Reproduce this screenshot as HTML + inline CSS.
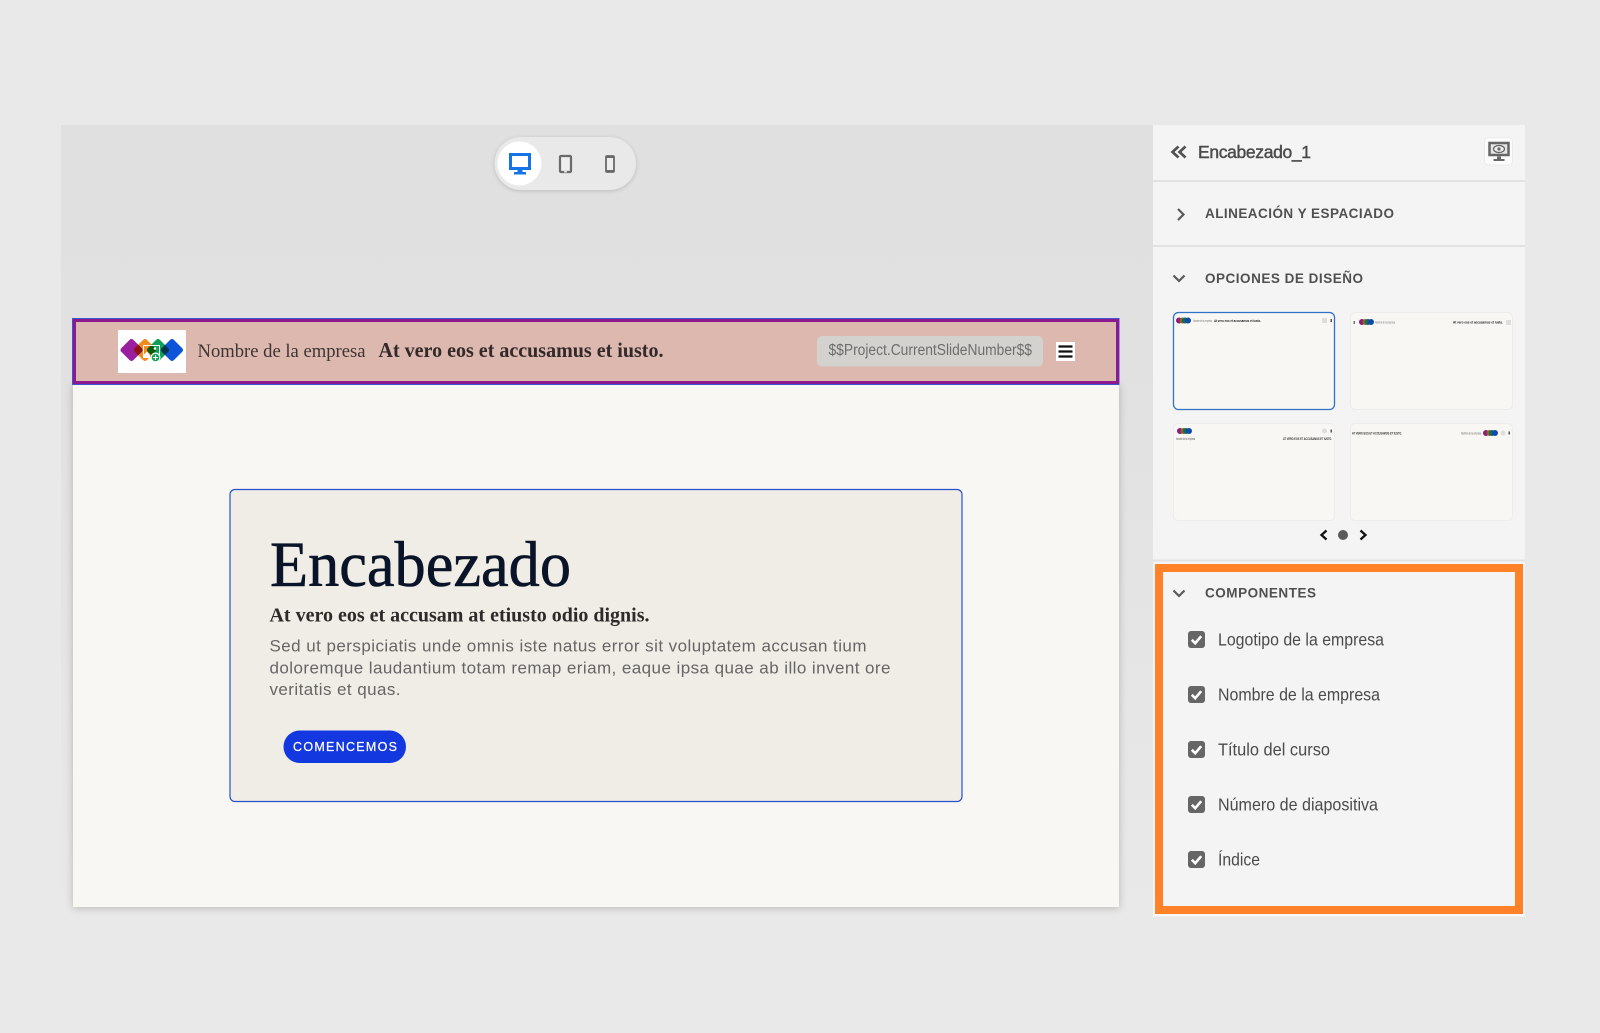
<!DOCTYPE html>
<html lang="es">
<head>
<meta charset="utf-8">
<title>Encabezado_1</title>
<style>
html,body{margin:0;padding:0;background:#e9e9e9;width:1600px;height:1033px;overflow:hidden}
svg{display:block}
.serif{font-family:"Liberation Serif",serif}
.sans{font-family:"Liberation Sans",sans-serif}
.ui{font-family:"Liberation Sans",sans-serif;fill:#4b4b4b}
.h{font-size:13.500px;font-weight:bold;fill:#505050}
.c{font-size:17.500px;fill:#4b4b4b}
.t{font-size:3.400px}
</style>
</head>
<body>
<svg width="1600" height="1033" viewBox="0 0 1600 1033" xmlns="http://www.w3.org/2000/svg">
<defs>
<linearGradient id="cv" x1="0" y1="0" x2="0" y2="1"><stop offset="0" stop-color="#e0e0e0"/><stop offset=".3" stop-color="#e1e1e1"/><stop offset="1" stop-color="#e9e9e9"/></linearGradient>
<g id="mini">
<circle cx="3" cy="0" r="3" fill="#8e1a7e"/>
<circle cx="6.500" cy="0" r="3" fill="#8a6a18"/>
<circle cx="9" cy="0" r="3" fill="#0f6a56"/>
<circle cx="12" cy="0" r="3" fill="#1048b0"/>
</g>
<g id="chk">
<rect width="17" height="17" rx="3" fill="#666"/>
<path d="M3.800 8.800l3.400 3.400L13.200 5.200" fill="none" stroke="#fff" stroke-width="2.600"/>
</g>
<path id="down" d="M0 0l5.500 5.500L11 0" fill="none" stroke="#5a5a5a" stroke-width="2.200"/>
</defs>

<rect width="1600" height="1033" fill="#e9e9e9"/>
<rect x="61" y="125" width="1092" height="791" fill="url(#cv)"/>

<!-- device toolbar -->
<rect x="494.500" y="137" width="141.500" height="53" rx="26.500" fill="#e9e9e9" style="filter:drop-shadow(0 1px 2px rgba(0,0,0,.16))"/>
<circle cx="519.500" cy="163.500" r="22" fill="#fff"/>
<rect x="510.500" y="154.500" width="19" height="14" fill="#fff" stroke="#1473e6" stroke-width="3"/>
<path d="M517.500 170h5v2h3.500v2.500h-12V172h3.500z" fill="#1473e6"/>
<rect x="560" y="156" width="11" height="16" rx="1" fill="#eee" stroke="#6a6a6a" stroke-width="2.200"/>
<rect x="564" y="171" width="3" height="1.500" fill="#ddd"/>
<rect x="606" y="156" width="8" height="16" rx="1" fill="#eee" stroke="#6a6a6a" stroke-width="1.800"/>
<rect x="606" y="155.500" width="8" height="2.500" fill="#6a6a6a"/>
<rect x="606" y="170" width="8" height="2.500" fill="#6a6a6a"/>

<!-- slide -->
<rect x="73" y="384" width="1046" height="523" fill="#f8f7f3" style="filter:drop-shadow(0 1px 4px rgba(0,0,0,.22))"/>

<!-- header bar -->
<rect x="72" y="318" width="1047.500" height="67" fill="#3f55d0"/>
<rect x="74.500" y="320.500" width="1043" height="62" fill="#dcb8ae" stroke="#8b1a8f" stroke-width="3"/>
<rect x="118" y="330" width="68" height="43" fill="#fff"/>
<g style="isolation:isolate">
<rect x="123" y="341.500" width="17" height="17" rx="2.500" transform="rotate(45 131.500 350)" fill="#9a1f9e" style="mix-blend-mode:multiply"/>
<rect x="136.500" y="341.500" width="17" height="17" rx="2.500" transform="rotate(45 145 350)" fill="#ee8d1c" style="mix-blend-mode:multiply"/>
<rect x="149.500" y="341.500" width="17" height="17" rx="2.500" transform="rotate(45 158 350)" fill="#10a05a" style="mix-blend-mode:multiply"/>
<rect x="163.500" y="341.500" width="17" height="17" rx="2.500" transform="rotate(45 172 350)" fill="#0d55d8" style="mix-blend-mode:multiply"/>
</g>
<rect x="143.500" y="345.500" width="16" height="12" fill="none" stroke="#fff" stroke-width="1"/>
<path d="M144 357.500v-3l3-3 3 3.500v2.500z" fill="#fff"/>
<circle cx="155" cy="348.500" r="1.300" fill="#fff"/>
<circle cx="155.500" cy="357.500" r="5" fill="#fff"/>
<circle cx="155.500" cy="357.500" r="3.800" fill="#12a05c"/>
<path d="M155.500 355v5M153 357.500h5" stroke="#fff" stroke-width="1.100"/>

<text class="serif" x="197.500" y="357" font-size="19" fill="#3d3534" textLength="168" lengthAdjust="spacingAndGlyphs">Nombre de la empresa</text>
<text class="serif" x="378.500" y="357" font-size="21" font-weight="bold" fill="#33292b" textLength="285" lengthAdjust="spacingAndGlyphs">At vero eos et accusamus et iusto.</text>

<rect x="817" y="336" width="226" height="30.500" rx="5" fill="#d3d2ce"/>
<text class="sans" x="828.500" y="355" font-size="15.500" fill="#6e6e6e" textLength="203.500" lengthAdjust="spacingAndGlyphs">$$Project.CurrentSlideNumber$$</text>

<rect x="1056" y="342" width="19" height="19" fill="#fff"/>
<path d="M1058.500 346.500h14M1058.500 351.500h14M1058.500 356.500h14" stroke="#111" stroke-width="2.200"/>

<!-- content card -->
<rect x="230" y="489.500" width="732" height="312" rx="5" fill="#f0ede6" stroke="#2a50c8" stroke-width="1.200"/>
<text class="serif" x="270" y="586" font-size="65" fill="#0a1428" stroke="#0a1428" stroke-width=".6" textLength="301" lengthAdjust="spacingAndGlyphs">Encabezado</text>
<text class="serif" x="269.500" y="621.500" font-size="20" font-weight="bold" fill="#2d2a2a" textLength="380" lengthAdjust="spacingAndGlyphs">At vero eos et accusam at etiusto odio dignis.</text>
<text class="sans" x="269.500" y="651.500" font-size="17" fill="#666" textLength="597" lengthAdjust="spacing">Sed ut perspiciatis unde omnis iste natus error sit voluptatem accusan tium</text>
<text class="sans" x="269.500" y="673.500" font-size="17" fill="#666" textLength="621" lengthAdjust="spacing">doloremque laudantium totam remap eriam, eaque ipsa quae ab illo invent ore</text>
<text class="sans" x="269.500" y="695" font-size="17" fill="#666" textLength="131" lengthAdjust="spacing">veritatis et quas.</text>
<rect x="283.500" y="730.500" width="122.500" height="32.500" rx="16.250" fill="#1438e0"/>
<text class="sans" x="293" y="751" font-size="12.500" fill="#fff" stroke="#fff" stroke-width=".25" textLength="104" lengthAdjust="spacing">COMENCEMOS</text>

<!-- right panel -->
<rect x="1153" y="125" width="372" height="791" fill="#f4f4f4"/>
<rect x="1153" y="914" width="372" height="2.500" fill="#f8f8f8"/>
<path d="M1178.500 146.500l-6 5.500 6 5.500M1185.500 146.500l-6 5.500 6 5.500" fill="none" stroke="#505050" stroke-width="2.600"/>
<text class="ui" x="1198" y="158" font-size="17.500" stroke="#4b4b4b" stroke-width=".45" textLength="113" lengthAdjust="spacing">Encabezado_1</text>
<rect x="1484.500" y="137.500" width="28" height="27.500" rx="4" fill="#fbfbfb" stroke="#ebebeb"/>
<rect x="1489.500" y="143" width="19" height="12" fill="#e6e6e6" stroke="#666" stroke-width="2.500"/>
<ellipse cx="1499" cy="149" rx="5.500" ry="3.500" fill="#eee" stroke="#666" stroke-width="1.300"/>
<circle cx="1499" cy="149" r="1.600" fill="#666"/>
<path d="M1497 156.500h4v2.500h3.500v2h-11v-2h3.500z" fill="#666"/>

<rect x="1153" y="180" width="372" height="2" fill="#e2e2e2"/>
<path d="M1178 209l5.500 5.500-5.500 5.500" fill="none" stroke="#5a5a5a" stroke-width="2.200"/>
<text class="ui h" x="1205" y="218" textLength="189" lengthAdjust="spacing">ALINEACIÓN Y ESPACIADO</text>
<rect x="1153" y="245" width="372" height="2" fill="#e2e2e2"/>
<use href="#down" x="1173.500" y="275.500"/>
<text class="ui h" x="1205" y="283" textLength="158" lengthAdjust="spacing">OPCIONES DE DISEÑO</text>

<!-- thumbnails -->
<rect x="1173.500" y="312.500" width="161" height="97" rx="5" fill="#f9f7f4" stroke="#2f72c6" stroke-width="1.300"/>
<use href="#mini" x="1176" y="320.500"/>
<text class="sans t" x="1193" y="322" fill="#777" textLength="19" lengthAdjust="spacingAndGlyphs">Nombre de la empresa</text>
<text class="sans t" x="1214" y="322" fill="#222" font-weight="bold" textLength="47" lengthAdjust="spacingAndGlyphs">At vero eos et accusamus et iusto.</text>
<rect x="1322" y="318" width="5" height="5" fill="#ddd"/>
<rect x="1330.500" y="319" width="1.500" height="3" fill="#555"/>

<rect x="1350.500" y="312.500" width="162" height="97" rx="5" fill="#f9f7f4" stroke="#ececec"/>
<rect x="1353.500" y="321" width="1.500" height="3" fill="#777"/>
<use href="#mini" x="1359" y="322"/>
<text class="sans t" x="1375" y="323.500" fill="#777" textLength="20" lengthAdjust="spacingAndGlyphs">Nombre de la empresa</text>
<text class="sans t" x="1453" y="323.500" fill="#222" font-weight="bold" textLength="50" lengthAdjust="spacingAndGlyphs">At vero eos et accusamus et iusto.</text>
<rect x="1506" y="320" width="5" height="5" fill="#ddd"/>

<rect x="1173.500" y="423.500" width="161" height="97" rx="5" fill="#f9f7f4" stroke="#ececec"/>
<use href="#mini" x="1177" y="431"/>
<text class="sans t" x="1176" y="440" fill="#555" textLength="19" lengthAdjust="spacingAndGlyphs">Nombre de la empresa</text>
<text class="sans t" x="1283" y="440" fill="#333" font-weight="bold" textLength="49" lengthAdjust="spacingAndGlyphs">AT VERO EOS ET ACCUSAMUS ET IUSTO.</text>
<circle cx="1324.500" cy="431" r="2.500" fill="#ddd"/>
<rect x="1330.500" y="429.500" width="1.500" height="3" fill="#555"/>

<rect x="1350.500" y="423.500" width="162" height="97" rx="5" fill="#f9f7f4" stroke="#ececec"/>
<text class="sans t" x="1352" y="434.500" fill="#333" font-weight="bold" textLength="50" lengthAdjust="spacingAndGlyphs">AT VERO EOS ET ACCUSAMUS ET IUSTO.</text>
<text class="sans t" x="1461" y="434.500" fill="#666" textLength="20" lengthAdjust="spacingAndGlyphs">Nombre de la empresa</text>
<use href="#mini" x="1483" y="433"/>
<circle cx="1503" cy="433" r="2.500" fill="#ddd"/>
<rect x="1508.500" y="431.500" width="1.500" height="3" fill="#555"/>

<path d="M1326.500 530.500l-5 4.500 5 4.500M1360.500 530.500l5 4.500-5 4.500" fill="none" stroke="#111" stroke-width="2.300"/>
<circle cx="1343" cy="535" r="5" fill="#5a5a5a"/>
<rect x="1153" y="559.500" width="372" height="2" fill="#e2e2e2"/>

<!-- componentes -->
<rect x="1159" y="568" width="360" height="342" fill="#f4f4f4" stroke="#ff8128" stroke-width="8"/>
<use href="#down" x="1173.500" y="590.500"/>
<text class="ui h" x="1205" y="597.500" textLength="111" lengthAdjust="spacing">COMPONENTES</text>
<use href="#chk" x="1188" y="631"/>
<text class="ui c" x="1218" y="645.500" textLength="166" lengthAdjust="spacingAndGlyphs">Logotipo de la empresa</text>
<use href="#chk" x="1188" y="686"/>
<text class="ui c" x="1218" y="700.500" textLength="162" lengthAdjust="spacingAndGlyphs">Nombre de la empresa</text>
<use href="#chk" x="1188" y="741"/>
<text class="ui c" x="1218" y="755.500" textLength="112" lengthAdjust="spacingAndGlyphs">Título del curso</text>
<use href="#chk" x="1188" y="796"/>
<text class="ui c" x="1218" y="810.500" textLength="160" lengthAdjust="spacingAndGlyphs">Número de diapositiva</text>
<use href="#chk" x="1188" y="851"/>
<text class="ui c" x="1218" y="865.500" textLength="42" lengthAdjust="spacingAndGlyphs">Índice</text>
</svg>
</body>
</html>
